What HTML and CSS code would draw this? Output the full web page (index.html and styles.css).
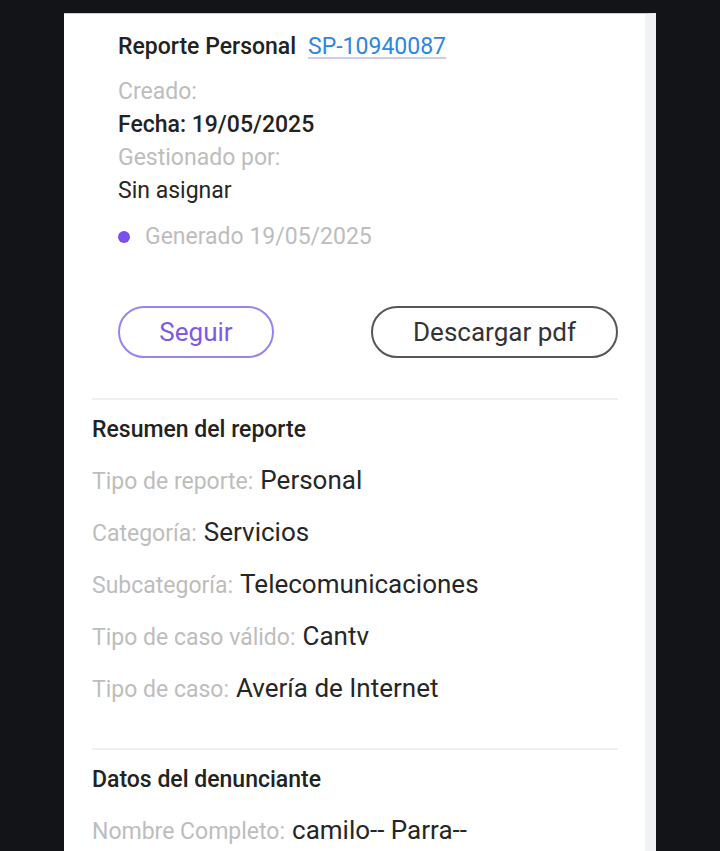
FILE: index.html
```html
<!DOCTYPE html>
<html lang="es">
<head>
<meta charset="utf-8">
<title>Reporte Personal</title>
<link rel="stylesheet" href="styles.css">
</head>
<body>
<div class="screen">
  <main class="card">
    <section class="head">
      <div class="title-row">
        <span class="title">Reporte Personal</span>
        <a class="code" href="#">SP-10940087</a>
      </div>
      <div class="meta">
        <div class="muted">Creado:</div>
        <div class="strong">Fecha: 19/05/2025</div>
        <div class="muted">Gestionado por:</div>
        <div class="plain">Sin asignar</div>
      </div>
      <div class="status"><span class="dot"></span><span class="muted">Generado 19/05/2025</span></div>
      <div class="actions">
        <button class="btn btn-follow">Seguir</button>
        <button class="btn btn-pdf">Descargar pdf</button>
      </div>
    </section>
    <section class="block">
      <h2 class="block-title">Resumen del reporte</h2>
      <div class="rows">
        <div class="row"><span class="label">Tipo de reporte:</span> <span class="value">Personal</span></div>
        <div class="row"><span class="label">Categoría:</span> <span class="value">Servicios</span></div>
        <div class="row"><span class="label">Subcategoría:</span> <span class="value">Telecomunicaciones</span></div>
        <div class="row"><span class="label">Tipo de caso válido:</span> <span class="value">Cantv</span></div>
        <div class="row"><span class="label">Tipo de caso:</span> <span class="value">Avería de Internet</span></div>
      </div>
    </section>
    <section class="block block-second">
      <h2 class="block-title">Datos del denunciante</h2>
      <div class="rows">
        <div class="row"><span class="label">Nombre Completo:</span> <span class="value">camilo-- Parra--</span></div>
      </div>
    </section>
  </main>
</div>
</body>
</html>
```
FILE: styles.css
```css
html, body {
  margin: 0;
  padding: 0;
  background: #121418;
}
body {
  font-family: Roboto, "Liberation Sans", sans-serif;
}
.screen {
  height: 851px;
  overflow: hidden;
  padding-top: 13px;
  padding-left: 64px;
  box-sizing: border-box;
}
.card {
  box-sizing: content-box;
  width: 526px;
  height: 900px;
  background: #ffffff;
  border-right: 11px solid #f1f2f5;
  border-top: 1px solid #c9ccd0;
  padding: 0 27px 0 28px;
}
.head {
  padding-left: 26px;
  padding-top: 17px;
}
.title-row {
  display: flex;
  align-items: baseline;
  gap: 12px;
  line-height: 32px;
}
.title {
  font-size: 23px;
  font-weight: 500;
  color: #222;
}
.code {
  font-size: 23px;
  color: #2a87e4;
  text-decoration: underline;
  text-decoration-color: #cfcaee;
  text-decoration-thickness: 2px;
  text-underline-offset: 3px;
}
.meta {
  margin-top: 12px;
  display: flex;
  flex-direction: column;
}
.meta > div {
  line-height: 33px;
  font-size: 23px;
}
.muted { color: #bdbdbd; }
.strong { color: #222; font-weight: 500; }
.plain { color: #262626; }
.status {
  margin-top: 16px;
  display: flex;
  align-items: center;
  gap: 15px;
  font-size: 23px;
  line-height: 28px;
}
.dot {
  width: 12px;
  height: 12px;
  border-radius: 50%;
  background: #7b4ff0;
}
.actions {
  margin-top: 55px;
  display: flex;
  justify-content: space-between;
}
.btn {
  box-sizing: border-box;
  height: 52px;
  border-radius: 26px;
  background: #fff;
  font-family: inherit;
  font-size: 26px;
  padding: 0;
}
.btn-follow {
  width: 156px;
  border: 2px solid #9a83ee;
  color: #7e5ae6;
}
.btn-pdf {
  width: 247px;
  border: 2px solid #55555c;
  color: #333;
}
.block {
  border-top: 2px solid #eeeff1;
  margin-top: 40px;
  padding-top: 16px;
}
.block-second { margin-top: 34px; }
.block-title {
  margin: 0;
  font-size: 23px;
  font-weight: 500;
  color: #222;
  line-height: 28px;
}
.rows {
  margin-top: 10px;
}
.row {
  height: 52px;
  line-height: 52px;
  white-space: nowrap;
}
.label {
  font-size: 23px;
  color: #bdbdbd;
}
.value {
  margin-left: 3px;
  font-size: 26px;
  color: #262626;
}
```
